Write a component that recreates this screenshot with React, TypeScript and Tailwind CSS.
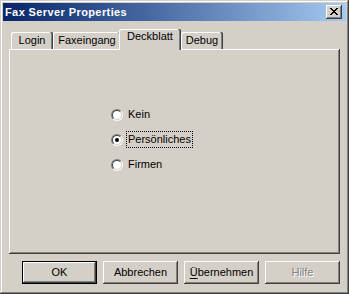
import React from "react";

const face = "bg-[#d4d0c8]";

function Tab({ label, width, selected }: { label: string; width: string; selected?: boolean }) {
  if (selected) {
    return (
      <div
        className={`relative z-10 ml-[-2px] mb-[-1px] flex h-[21px] ${width} justify-center rounded-t-[2px] ${face} pt-[2px] shadow-[inset_-1px_0_0_#404040,inset_-2px_0_0_#808080,inset_1px_1px_0_#fff]`}
      >
        {label}
      </div>
    );
  }
  return (
    <div
      className={`flex h-[17px] ${width} justify-center rounded-t-[2px] ${face} pt-[3px] shadow-[inset_-1px_0_0_#404040,inset_-2px_0_0_#808080,inset_1px_1px_0_#fff]`}
    >
      {label}
    </div>
  );
}

function Radio({ label, checked }: { label: string; checked?: boolean }) {
  return (
    <div className="flex h-[17px] items-center">
      <div className="flex h-[12px] w-[12px] items-center justify-center rounded-full border border-t-[#808080] border-l-[#808080] border-r-white border-b-white">
        <div className="flex h-[10px] w-[10px] items-center justify-center rounded-full border border-t-[#404040] border-l-[#404040] border-r-[#d4d0c8] border-b-[#d4d0c8] bg-white">
          {checked && <div className="h-[4px] w-[4px] rounded-full bg-black" />}
        </div>
      </div>
      <span
        className={`ml-[3px] flex h-[17px] items-center border border-dotted px-[1px] ${
          checked ? "border-black" : "border-transparent"
        }`}
      >
        {label}
      </span>
    </div>
  );
}

function Button({ children, primary, disabled }: { children: React.ReactNode; primary?: boolean; disabled?: boolean }) {
  const bevel = primary
    ? "border border-black shadow-[inset_-1px_-1px_0_#404040,inset_1px_1px_0_#fff,inset_-2px_-2px_0_#808080]"
    : "shadow-[inset_-1px_-1px_0_#404040,inset_1px_1px_0_#fff,inset_-2px_-2px_0_#808080,inset_2px_2px_0_#d4d0c8]";
  return (
    <div
      className={`flex h-[23px] w-[75px] items-center justify-center ${face} ${bevel} ${
        disabled ? "text-[#808080] [text-shadow:1px_1px_0_#fff]" : "text-black"
      }`}
    >
      {children}
    </div>
  );
}

export default function App() {
  return (
    <div
      className={`flex h-[294px] w-[349px] flex-col ${face} p-[3px] text-[11px] leading-none text-black shadow-[inset_-1px_-1px_0_#404040,inset_1px_1px_0_#d4d0c8,inset_-2px_-2px_0_#808080,inset_2px_2px_0_#fff]`}
      style={{ fontFamily: '"Liberation Sans", Arial, sans-serif' }}
    >
      {/* Title bar */}
      <div className="flex h-[18px] items-center justify-between bg-linear-to-r from-[#0a246a] to-[#a6caf0] pl-[2px] pr-[4px]">
        <span className="text-[11px] font-bold tracking-[0.4px] text-white">Fax Server Properties</span>
        <div
          className={`flex h-[14px] w-[16px] items-center justify-center ${face} shadow-[inset_-1px_-1px_0_#404040,inset_1px_1px_0_#fff,inset_-2px_-2px_0_#808080]`}
        >
          <svg width="8" height="7" viewBox="0 0 8 7" shapeRendering="crispEdges" className="mb-[1px]">
            <path
              d="M0 0h2v1H0zM6 0h2v1H6zM1 1h2v1H1zM5 1h2v1H5zM2 2h4v1H2zM3 3h2v1H3zM2 4h4v1H2zM1 5h2v1H1zM5 5h2v1H5zM0 6h2v1H0zM6 6h2v1H6z"
              fill="#000"
            />
          </svg>
        </div>
      </div>

      {/* Tabs */}
      <div className="mt-[8px] flex h-[20px] items-end px-[8px]">
        <Tab label="Login" width="w-[42px]" />
        <Tab label="Faxeingang" width="w-[68px]" />
        <Tab label="Deckblatt" width="w-[62px]" selected />
        <Tab label="Debug" width="w-[42px]" />
      </div>

      {/* Panel */}
      <div className="mx-[6px] h-[205px] shadow-[inset_-1px_-1px_0_#404040,inset_1px_1px_0_#fff,inset_-2px_-2px_0_#808080]">
        <div className="flex flex-col gap-[8px] pl-[102px] pt-[57px]">
          <Radio label="Kein" />
          <Radio label="Persönliches" checked />
          <Radio label="Firmen" />
        </div>
      </div>

      {/* Buttons */}
      <div className="mt-[7px] flex justify-end gap-[6px] pr-[6px]">
        <Button primary>OK</Button>
        <Button>Abbrechen</Button>
        <Button>
          <span className="underline underline-offset-[2px]">Ü</span>bernehmen
        </Button>
        <Button disabled>Hilfe</Button>
      </div>
    </div>
  );
}
